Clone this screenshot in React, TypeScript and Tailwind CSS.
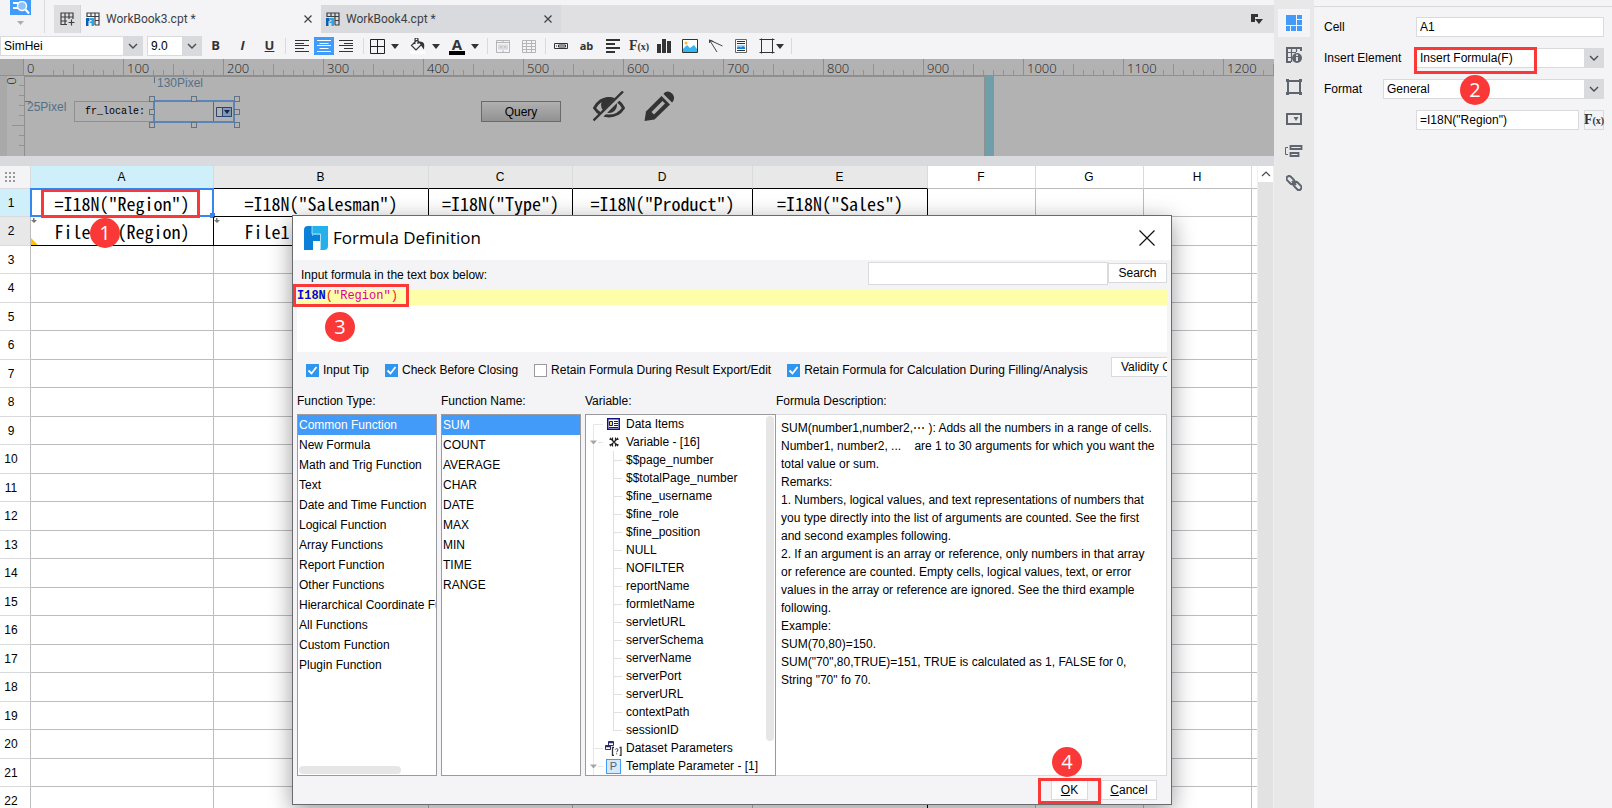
import React from "react";

const SANS = "font-['Liberation_Sans',sans-serif]";
const HUMANIST = "font-['Open_Sans',sans-serif]";
const MONO = "font-['Liberation_Mono',monospace]";
const HALFWIDTH = "font-['Noto_Sans_CJK_SC',sans-serif] [font-feature-settings:'hwid']";

function Chevron() {
  return (
    <svg width="10" height="6" viewBox="0 0 10 6" fill="none" stroke="#4a4a4f" strokeWidth="1.4">
      <path d="M1 1l4 4 4-4" />
    </svg>
  );
}

function DropArrow({ label, className }: { label: string; className: string }) {
  return (
    <button aria-label={label} className={`flex h-5 w-2 items-center justify-center ${className}`}>
      <svg width="8" height="5" viewBox="0 0 8 5">
        <path d="M0 0h8L4 5z" fill="#333" />
      </svg>
    </button>
  );
}

function Sep({ className }: { className: string }) {
  return <div className={`h-4 w-px shrink-0 bg-[#d9dadd] ${className}`} />;
}

function IconButton({
  label,
  className,
  children,
}: {
  label: string;
  className: string;
  children: React.ReactNode;
}) {
  return (
    <button aria-label={label} className={`flex h-[18px] shrink-0 items-center justify-center ${className}`}>
      {children}
    </button>
  );
}

function Dropdown({
  id,
  label,
  value,
  className,
}: {
  id: string;
  label?: string;
  value: string;
  className: string;
}) {
  return (
    <div className={`relative flex h-5 border border-[#d9dadd] bg-white ${className}`}>
      <select
        id={id}
        aria-label={label}
        defaultValue={value}
        className="h-full w-full appearance-none bg-white pr-5 pl-[3px] text-[12px] leading-[16px] text-black outline-none"
      >
        <option>{value}</option>
      </select>
      <div className="pointer-events-none absolute inset-y-0 right-0 flex w-[19px] items-center justify-center bg-[#d9dadd]">
        <Chevron />
      </div>
    </div>
  );
}

function Step({ n, className }: { n: number; className: string }) {
  return (
    <div
      className={`absolute z-20 flex size-[30px] items-center justify-center rounded-full bg-[#fb3838] text-[20px] leading-[30px] text-white ${HUMANIST} ${className}`}
    >
      {n}
    </div>
  );
}

function Mark({ className }: { className: string }) {
  return <div className={`pointer-events-none absolute z-10 border-[3px] border-[#fb3838] ${className}`} />;
}

function WorkbookIcon() {
  return (
    <svg width="14" height="14" viewBox="0 0 14 14" fill="none">
      <path d="M1 5V1h12v12H9M1 4.500h12M5 1v4M9 1v12M9 8.500h4" stroke="#3c3f45" strokeWidth="1.200" />
      <path d="M0 6h3.500v3H2.500v5H0z" fill="#0b5fae" />
      <path d="M4 6h4v8H5.500v-3H3.500V9.500H5.500V8H4z" fill="#2aa5e6" />
    </svg>
  );
}

function Tab({ name, className }: { name: string; className: string }) {
  return (
    <div className={`flex w-60 items-center gap-[6px] pr-[7px] pl-[5px] ${className}`}>
      <WorkbookIcon />
      <a href="#" className="flex-1 font-['Roboto',sans-serif] text-[12px] text-[#3c3f45]">
        {name}
      </a>
      <button aria-label={`Close ${name}`} className="flex size-3 items-center justify-center">
        <svg width="8" height="8" viewBox="0 0 8 8" stroke="#3c3f45" strokeWidth="1.2">
          <path d="M0.500 0.500l7 7M7.500 0.500l-7 7" />
        </svg>
      </button>
    </div>
  );
}

function TopBar() {
  return (
    <div className="flex h-[33px]">
      <div className="flex w-[54px]">
        <div className="flex w-[45px] flex-col items-center border-r border-[#d9dadd] pr-1">
          <button aria-label="Preview" className="flex h-[15px] w-[21px] items-end justify-center bg-[#429bf9]">
            <svg width="19" height="14" viewBox="0 0 19 14" fill="none" stroke="#fff">
              <path d="M2 2h5M2 7h5" strokeWidth="2" />
              <circle cx="11" cy="5" r="4.500" fill="#8cc2fb" strokeWidth="1.400" />
              <path d="M14.500 8.500l3.500 4" strokeWidth="2" />
            </svg>
          </button>
          <svg className="mt-[6px]" width="7" height="4" viewBox="0 0 7 4">
            <path d="M0 0h7L3.500 4z" fill="#adadb0" />
          </svg>
        </div>
      </div>
      <div className="mt-[5px] flex flex-1 bg-[#e0e0e2]">
        <button aria-label="New workbook" className="flex w-[27px] items-center justify-center border-r border-[#d2d3d6] bg-[#dedee0]">
          <svg width="15" height="14" viewBox="0 0 15 14" fill="none" stroke="#3c3f45" strokeWidth="1.200">
            <path d="M7 12.500H1V1h12v6M1 5h12M1 9h6M5 1v11.500M9 1v6" />
            <path d="M11.500 7.500v6M8.500 10.500h6" />
          </svg>
        </button>
        <Tab name="WorkBook3.cpt *" className="bg-[#f4f4f7]" />
        <Tab name="WorkBook4.cpt *" className="bg-[#d9dadd]" />
        <div className="flex flex-1 items-center justify-end pr-[11px]">
          <button aria-label="Tab list" className="flex">
            <svg width="12" height="10" viewBox="0 0 12 10" fill="#333">
              <path d="M0 0h7v3H4v5H0z" />
              <path d="M4 5h8l-4 5z" />
            </svg>
          </button>
        </div>
      </div>
    </div>
  );
}

function FxGlyph() {
  return (
    <span className="font-['Liberation_Serif',serif] text-[14px] leading-4 font-bold text-[#333]">
      F<span className="text-[10px]">(x)</span>
    </span>
  );
}

function Toolbar() {
  return (
    <div className="flex h-[26px] items-center bg-[#f4f4f7]">
      <Dropdown id="font" label="Font" value="SimHei" className="w-[143px]" />
      <Dropdown id="size" label="Font size" value="9.0" className="ml-1 w-[55px]" />
      <IconButton label="Bold" className={`w-[27px] text-[13px] font-bold text-[#333] ${HUMANIST}`}>B</IconButton>
      <IconButton label="Italic" className={`w-[27px] text-[13px] font-bold text-[#333] italic ${HUMANIST}`}>I</IconButton>
      <IconButton label="Underline" className={`w-[27px] text-[13px] font-bold text-[#333] underline ${HUMANIST}`}>U</IconButton>
      <Sep className="ml-[2px]" />
      <IconButton label="Align left" className="ml-[6px] w-5">
        <svg width="14" height="12" viewBox="0 0 14 12" stroke="#333" strokeWidth="1">
          <path d="M0 .5h14M0 3.500h9M0 5.500h14M0 8.500h9M0 11.500h14" />
        </svg>
      </IconButton>
      <IconButton label="Align center" className="ml-[2px] w-5 bg-[#429bf9]">
        <svg width="14" height="12" viewBox="0 0 14 12" stroke="#fff" strokeWidth="1">
          <path d="M0 .5h14M2.500 3.500h9M0 5.500h14M2.500 8.500h9M0 11.500h14" />
        </svg>
      </IconButton>
      <IconButton label="Align right" className="ml-[2px] w-5">
        <svg width="14" height="12" viewBox="0 0 14 12" stroke="#333" strokeWidth="1">
          <path d="M0 .5h14M5 3.500h9M0 5.500h14M5 8.500h9M0 11.500h14" />
        </svg>
      </IconButton>
      <Sep className="ml-[7px]" />
      <IconButton label="Borders" className="ml-[6px] w-[15px]">
        <svg width="15" height="15" viewBox="0 0 15 15" fill="none" stroke="#222" strokeWidth="1">
          <path d="M.5.5h14v14H.5zM7.500.5v14M.5 7.500h14" />
        </svg>
      </IconButton>
      <DropArrow label="Border options" className="ml-[6px]" />
      <IconButton label="Fill colour" className="ml-[11px] w-[15px]">
        <svg width="15" height="16" viewBox="0 0 15 16" fill="none" stroke="#333" strokeWidth="1.200">
          <path d="M6.500 2.500L1.500 7.500l4.500 4.500 5.500-5.500-4-4zM5 6V1.500a1.500 1.500 0 0 1 3 0V6" />
          <path d="M10 4c3 0 4.500 2 3.500 6l-2-3z" fill="#333" />
          <path d="M0 14.500h15" stroke="#fff" strokeWidth="3" />
        </svg>
      </IconButton>
      <DropArrow label="Fill options" className="ml-[7px]" />
      <IconButton label="Text colour" className="ml-[9px] w-4">
        <span className="flex flex-col items-center">
          <span className={`text-[15px] leading-[13px] font-bold text-[#333] ${HUMANIST}`}>A</span>
          <span className="h-[4px] w-4 bg-black" />
        </span>
      </IconButton>
      <DropArrow label="Text colour options" className="ml-[6px]" />
      <Sep className="ml-[8px]" />
      <IconButton label="Merge cells" className="ml-[8px] w-[14px]">
        <svg width="14" height="13" viewBox="0 0 14 13" fill="none" stroke="#b5b5b8">
          <path d="M.5.5h13v12H.5zM.5 2.500h13" />
          <path d="M2 4.500h10v5H2z" fill="#d9dadd" stroke="none" />
          <path d="M7 .5v2M7 10v2.500M4 7h2M8 7h2" />
        </svg>
      </IconButton>
      <IconButton label="Unmerge cells" className="ml-[12px] w-[14px]">
        <svg width="14" height="13" viewBox="0 0 14 13" fill="none" stroke="#b5b5b8">
          <path d="M.5.5h13v12H.5zM.5 3.500h13M.5 6.500h13M.5 9.500h13M4.500.5v12M9.500.5v12" />
        </svg>
      </IconButton>
      <Sep className="ml-[9px]" />
      <IconButton label="Widget" className="ml-[8px] w-[14px]">
        <svg width="14" height="6" viewBox="0 0 14 6" fill="none" stroke="#333">
          <path d="M.5.5h13v5H.5zM2 3h1M4.500 2h7v2h-7z" />
        </svg>
      </IconButton>
      <IconButton label="Text" className={`ml-[11px] w-[15px] text-[11px] font-bold text-[#333] ${HUMANIST}`}>ab</IconButton>
      <IconButton label="Rich text" className="ml-[12px] w-[14px]">
        <svg width="14" height="14" viewBox="0 0 14 14" stroke="#333" strokeWidth="2">
          <path d="M0 1h14M0 5h9M0 9h14M0 13h9" />
        </svg>
      </IconButton>
      <IconButton label="Formula" className="ml-[10px] w-[18px]">
        <FxGlyph />
      </IconButton>
      <IconButton label="Chart" className="ml-[9px] w-[14px]">
        <svg width="14" height="14" viewBox="0 0 14 14" fill="#333">
          <path d="M0 5h4v9H0zM5 0h4v14H5zM10 2h4v12h-4z" />
        </svg>
      </IconButton>
      <IconButton label="Image" className="ml-[11px] w-4">
        <svg width="16" height="14" viewBox="0 0 16 14">
          <path d="M.5.5h15v13H.5z" fill="#fff" stroke="#333" />
          <path d="M1 13V10l4-4 3 3 4-3 3 4v3z" fill="#35b5f2" />
          <circle cx="4" cy="4" r="1.500" fill="#f7b733" />
        </svg>
      </IconButton>
      <IconButton label="Slope line" className="ml-[11px] w-[14px]">
        <svg width="14" height="14" viewBox="0 0 14 14" stroke="#444" fill="none">
          <path d="M.5 1l13 6M.5 1l7.500 12M.5 1l4 1.500M.5 1v3" />
        </svg>
      </IconButton>
      <IconButton label="Sub report" className="ml-[12px] w-[12px]">
        <svg width="12" height="14" viewBox="0 0 12 14">
          <path d="M.5.5h11v13H.5z" fill="#fff" stroke="#666" />
          <path d="M2 2.500h8M2 4.500h8M2 11.500h8" stroke="#333" />
          <path d="M2 6h8v4H2z" fill="#9ed4f8" />
          <path d="M2 10V8.500l2-1 2 1 2-1.500 2 1.500V10z" fill="#1583d6" />
        </svg>
      </IconButton>
      <IconButton label="Float element" className="ml-[12px] w-4">
        <svg width="16" height="16" viewBox="0 0 16 16" fill="none" stroke="#333">
          <path d="M2.500.5v15M13.500.5v15M.5 1.500h15M.5 14.500h15" />
        </svg>
      </IconButton>
      <DropArrow label="Float options" className="ml-px" />
      <Sep className="ml-[7px]" />
    </div>
  );
}

const RULER = [0, 100, 200, 300, 400, 500, 600, 700, 800, 900, 1000, 1100, 1200];

function Ruler() {
  return (
    <div className="flex h-[17px] overflow-hidden border-b border-[#8f8f8f] bg-[#b2b2b2]">
      <div className="w-[23px] shrink-0 bg-[#a9a9a9]" />
      {RULER.map((v) => (
        <div key={v} className="relative w-[100px] shrink-0 border-l border-[#8f8f8f] pl-[3px]">
          <svg className="absolute top-0 left-0" width="99" height="16" viewBox="0 0 99 16" stroke="#929292">
            <path
              d={
                v >= 1000
                  ? "M39.500 11v5M49.500 5v11M59.500 11v5M69.500 11v5M79.500 11v5M89.500 11v5"
                  : "M29.500 11v5M39.500 11v5M49.500 5v11M59.500 11v5M69.500 11v5M79.500 11v5M89.500 11v5"
              }
            />
          </svg>
          <span className={`relative block text-[13px] leading-[19px] font-light text-[#222] ${HUMANIST}`}>{v}</span>
        </div>
      ))}
    </div>
  );
}

function Handle({ className }: { className: string }) {
  return <div className={`absolute size-[6px] border border-[#5f7489] bg-[#b2b2b2] ${className}`} />;
}

function ParameterPane() {
  return (
    <div className="flex h-[80px] shrink-0 overflow-hidden bg-[#b2b2b2]">
      <div className="w-[7px] bg-[#a9a9a9]" />
      <div className="relative w-[18px] border-r border-[#8f8f8f]">
        <span className={`absolute top-0 left-[1px] rotate-90 text-[13px] leading-[10px] font-light text-[#222] ${HUMANIST}`}>0</span>
        <svg className="absolute top-0 right-0" width="12" height="80" viewBox="0 0 12 80" stroke="#929292">
          <path d="M7 9.500h5M7 19.500h5M7 29.500h5M7 39.500h5M0 49.500h12M7 59.500h5M7 69.500h5" />
        </svg>
      </div>
      <div className={`relative w-[960px] border-t border-r border-[#8f8f8f] ${SANS}`}>
        <span className={`absolute -top-px left-[132px] text-[12px] leading-[14px] text-[#557087] ${SANS}`}>130Pixel</span>
        <div className="absolute top-0 left-[129px] h-[6px] w-px bg-[#557087]" />
        <span className={`absolute top-[23px] left-[2px] text-[12px] leading-[14px] text-[#557087] ${SANS}`}>25Pixel</span>
        <div className="absolute top-[24px] left-0 h-px w-[6px] bg-[#557087]" />
        <label
          htmlFor="locale"
          className={`absolute top-[24px] left-[49px] h-[21px] w-[80px] border border-[#8f8f8f] pl-[10px] text-[10px] leading-[20px] text-black ${MONO}`}
        >
          fr_locale:
        </label>
        <div className="absolute top-[23px] left-[128px] flex h-[23px] w-[82px] border-2 border-[#5985b8]">
          <input id="locale" className="w-full min-w-0 bg-transparent outline-none" />
          <div className="flex w-[20px] shrink-0 items-center justify-center border-l border-[#666]">
            <svg width="16" height="10" viewBox="0 0 16 10">
              <path d="M.5.5h15v9H.5z" fill="#b2b2b2" stroke="#2a4570" />
              <path d="M6.500.5h9v9h-9z" fill="#8098bd" stroke="#2a4570" />
              <path d="M8 3h6l-3 4z" fill="#14264a" />
            </svg>
          </div>
        </div>
        <Handle className="top-[19px] left-[124px]" />
        <Handle className="top-[19px] left-[166px]" />
        <Handle className="top-[19px] left-[209px]" />
        <Handle className="top-[32px] left-[124px]" />
        <Handle className="top-[32px] left-[209px]" />
        <Handle className="top-[45px] left-[124px]" />
        <Handle className="top-[45px] left-[166px]" />
        <Handle className="top-[45px] left-[209px]" />
        <button className="absolute top-[24px] left-[456px] h-[21px] w-[80px] border border-[#6a6a6a] bg-linear-to-b from-[#b0b0b0] to-[#929292] text-[12px] leading-[18px] text-black">
          Query
        </button>
        <button aria-label="Hide" className="absolute top-[14px] left-[568px]">
          <svg width="32" height="31" viewBox="0 0 32 31" fill="none">
            <path d="M1.500 17C5 10.500 10 7.500 16 7.500s11 3 14.500 9.500c-3.500 5.500-8.500 8-14.500 8S5 22.500 1.500 17z" stroke="#333" strokeWidth="2.800" />
            <circle cx="16" cy="14" r="8" fill="#333" />
            <path d="M2 30.500L31 1.500" stroke="#b2b2b2" strokeWidth="5" />
            <path d="M.5 29.500L30 .5" stroke="#333" strokeWidth="2.400" />
          </svg>
        </button>
        <button aria-label="Edit" className="absolute top-[14px] left-[619px]">
          <svg width="31" height="31" viewBox="0 0 31 31" fill="#333">
            <path d="M.5 30L2 20.500 17.500 5l8.500 8.500L10.500 28.500z" />
            <path d="M19.500 3c2.500-3.500 6-3 8.500-.5s3 6 0 9z" />
            <path d="M7.500 21L18.500 10l2.500 2.500L10 23.500z" fill="#b2b2b2" />
          </svg>
        </button>
      </div>
      <div className="w-[9px] bg-[#6f9fab]" />
    </div>
  );
}

type Col = { name: string; head: string; row1?: string; row2?: string };

const COLUMNS: Col[] = [
  { name: "A", head: "bg-[#cfeffb] border-b-black", row1: '=I18N("Region")', row2: "File1.G(Region)" },
  { name: "B", head: "bg-[#e8e8e8] border-b-black", row1: '=I18N("Salesman")', row2: "File1.G(Salesman)" },
  { name: "C", head: "bg-[#e8e8e8] border-b-black", row1: '=I18N("Type")' },
  { name: "D", head: "bg-[#e8e8e8] border-b-black", row1: '=I18N("Product")' },
  { name: "E", head: "bg-[#e8e8e8] border-b-black", row1: '=I18N("Sales")' },
  { name: "F", head: "bg-white border-b-[#bdbdbf]" },
  { name: "G", head: "bg-white border-b-[#bdbdbf]" },
  { name: "H", head: "bg-white border-b-[#bdbdbf]" },
];

const ROWS = Array.from({ length: 22 }, (_, i) => i + 1);

function borderColor(row: number, col: string) {
  const filled = "ABCDE".includes(col);
  if (row <= 2 && filled) return "border-black";
  if (col === "E") return "border-b-[#bdbdbf] border-r-black";
  return "border-[#bdbdbf]";
}

function rowHead(row: number) {
  if (row === 1) return "bg-[#cfeffb]";
  if (row === 2) return "bg-[#e8e8e8]";
  return "bg-white";
}

function ExpandMark() {
  return (
    <svg className="absolute top-[1px] left-0" width="6" height="5" viewBox="0 0 6 5">
      <path d="M2 0h1.500v2H6L3 5 0 2h2z" fill="#777" />
    </svg>
  );
}

function Sheet() {
  return (
    <div className="flex min-h-0 flex-1 overflow-hidden bg-white">
      <div className="min-w-0 flex-1">
        <table className="w-full table-fixed border-separate border-spacing-0 text-[14px] text-black">
          <colgroup>
            <col className="w-[31px]" />
            <col className="w-[183px]" />
            <col className="w-[215px]" />
            <col className="w-[144px]" />
            <col className="w-[180px]" />
            <col className="w-[175px]" />
            <col className="w-[108px]" />
            <col className="w-[108px]" />
            <col className="w-[108px]" />
            <col />
          </colgroup>
          <thead>
            <tr className="h-[23px]">
              <th aria-label="Select all" className="border-r border-b border-[#d9dadd] bg-[#f4f4f7] p-0">
                <svg className="ml-[5px]" width="12" height="10" viewBox="0 0 12 10" stroke="#999" strokeWidth="2" strokeDasharray="2 2">
                  <path d="M0 1h10M0 5h10M0 9h10" />
                </svg>
              </th>
              {COLUMNS.map((c) => (
                <th
                  key={c.name}
                  className={`border-r border-b border-r-[#d9dadd] p-0 pr-px text-[12px] leading-[20px] font-normal ${c.head}`}
                >
                  {c.name}
                </th>
              ))}
              <th aria-label="More columns" className="border-b border-[#bdbdbf] p-0" />
            </tr>
          </thead>
          <tbody>
            {ROWS.map((r) => (
              <tr key={r} className={r % 2 === 1 ? "h-[28px]" : "h-[29px]"}>
                <th
                  className={`border-r border-b border-r-[#bdbdbf] border-b-[#d9dadd] p-0 pr-2 text-[12px] leading-[20px] font-normal ${rowHead(r)}`}
                >
                  {r}
                </th>
                {COLUMNS.map((c) => (
                  <td
                    key={c.name}
                    className={`relative border-r border-b p-0 text-center text-[18px] leading-[20px] ${HALFWIDTH} ${borderColor(r, c.name)}`}
                  >
                    {r === 1 && c.row1}
                    {r === 2 && c.row2}
                    {r === 2 && c.row2 && <ExpandMark />}
                    {r === 1 && c.name === "A" && (
                      <>
                        <div className="absolute -inset-px border-2 border-[#3586ee]" />
                        <div className="absolute -right-[2px] -bottom-[2px] size-[5px] bg-[#3586ee]" />
                        <Mark className="top-0 left-[10px] h-[29px] w-[159px]" />
                        <Step n={1} className="top-[29px] left-[59px]" />
                      </>
                    )}
                    {r === 2 && c.name === "A" && (
                      <svg className="absolute bottom-0 left-0" width="7" height="7" viewBox="0 0 7 7">
                        <path d="M0 0l7 7H0z" fill="#fbc20b" />
                      </svg>
                    )}
                  </td>
                ))}
                <td className="border-b border-[#bdbdbf] p-0" />
              </tr>
            ))}
          </tbody>
        </table>
      </div>
      <div className="flex w-[17px] shrink-0 flex-col border-x border-[#f0f0f0] bg-[#e2e2e2]">
        <button aria-label="Scroll up" className="flex h-4 items-center justify-center bg-white">
          <svg width="10" height="6" viewBox="0 0 10 6" fill="none" stroke="#4a4a4f" strokeWidth="1.200">
            <path d="M1 5l4-4 4 4" />
          </svg>
        </button>
      </div>
    </div>
  );
}

function RailButton({ label, active, children }: { label: string; active?: boolean; children: React.ReactNode }) {
  return (
    <button
      aria-label={label}
      className={`flex h-7 w-8 items-center justify-center ${active ? "bg-[#f4f4f7]" : ""}`}
    >
      {children}
    </button>
  );
}

function Rail() {
  return (
    <div className="flex w-10 shrink-0 flex-col items-center gap-1 bg-[#e8e8e9] pt-[9px]">
      <RailButton label="Cell element" active>
        <svg width="16" height="16" viewBox="0 0 16 16" fill="#429bf9">
          <path d="M0 0h10v10H0zM11 0h5v4h-5zM11 5h5v5h-5zM0 11h4v5H0zM5 11h5v5H5zM11 11h5v5h-5z" />
        </svg>
      </RailButton>
      <RailButton label="Cell attributes">
        <svg width="16" height="16" viewBox="0 0 16 16" fill="none" stroke="#5f646e">
          <path d="M5 15H1V1h14v3" strokeWidth="2" />
          <path d="M1 5.500h9M1 10.500h4M5.500 1v14M10.500 1v4" strokeWidth="1.200" />
          <circle cx="11" cy="11" r="5" fill="#5f646e" stroke="none" />
          <path d="M11 7.500v1.500M11 10v4" stroke="#fff" strokeWidth="1.600" />
        </svg>
      </RailButton>
      <RailButton label="Float element">
        <svg width="16" height="16" viewBox="0 0 16 16" fill="none" stroke="#5f646e">
          <path d="M2 2h12v12H2z" strokeWidth="2" />
          <path d="M0 0h3v3H0zM13 0h3v3h-3zM0 13h3v3H0zM13 13h3v3h-3z" fill="#5f646e" stroke="none" />
        </svg>
      </RailButton>
      <RailButton label="Widget settings">
        <svg width="16" height="12" viewBox="0 0 16 12" fill="none" stroke="#5f646e">
          <path d="M1 1h14v10H1z" strokeWidth="2" />
          <path d="M7.500 4h5l-2.500 4z" fill="#5f646e" stroke="none" />
        </svg>
      </RailButton>
      <RailButton label="Condition attributes">
        <svg width="18" height="12" viewBox="0 0 18 12" fill="none" stroke="#5f646e">
          <path d="M3 2.500H.500v7H3" />
          <path d="M5.500 1h11v3h-11zM5.500 8h8v3h-8z" strokeWidth="1.800" />
        </svg>
      </RailButton>
      <RailButton label="Hyperlink">
        <svg width="16" height="16" viewBox="0 0 16 16" fill="none" stroke="#5f646e" strokeWidth="2">
          <rect x="0" y="2.500" width="9" height="5" rx="2.500" transform="rotate(45 4.500 5)" />
          <rect x="7" y="8.500" width="9" height="5" rx="2.500" transform="rotate(45 11.500 11)" />
          <path d="M6 6l4 4" />
        </svg>
      </RailButton>
    </div>
  );
}

function Properties() {
  return (
    <aside className="w-[298px] shrink-0 bg-[#f4f4f7] pt-[6px] text-[12px] text-black">
      <div className="flex flex-col gap-[11px] border-t border-[#d9dadd] pt-[10px] pr-2 pl-[10px]">
        <div className="flex h-5 items-center">
          <label htmlFor="cell" className="w-[92px]">Cell</label>
          <input id="cell" defaultValue="A1" className="h-5 min-w-0 flex-1 border border-[#d9dadd] bg-white px-[3px] outline-none" />
        </div>
        <div className="relative flex h-5 items-center">
          <label htmlFor="element" className="w-[92px]">Insert Element</label>
          <Dropdown id="element" value="Insert Formula(F)" className="flex-1" />
          <Mark className="-top-[1px] left-[90px] h-[27px] w-[123px]" />
          <Step n={2} className="top-[27px] left-[136px]" />
        </div>
        <div className="flex h-5 items-center">
          <label htmlFor="format" className="w-[59px]">Format</label>
          <Dropdown id="format" value="General" className="flex-1" />
        </div>
        <div className="flex h-5 items-center gap-[5px] pl-[92px]">
          <input
            aria-label="Formula"
            defaultValue={'=I18N("Region")'}
            className="h-5 min-w-0 flex-1 border border-[#d9dadd] bg-white px-[3px] outline-none"
          />
          <button aria-label="Edit formula" className="flex size-5 items-center justify-center border border-[#d9dadd]">
            <FxGlyph />
          </button>
        </div>
      </div>
    </aside>
  );
}

function CheckOption({ label, checked }: { label: string; checked: boolean }) {
  return (
    <label className="flex items-center gap-1 whitespace-nowrap">
      <span className="relative flex size-[13px]">
        <input
          type="checkbox"
          defaultChecked={checked}
          className="peer size-[13px] appearance-none border border-[#9a9a9f] bg-white checked:border-[#2f96f0] checked:bg-[#2f96f0]"
        />
        <svg
          className="pointer-events-none absolute inset-0 hidden peer-checked:block"
          width="13"
          height="13"
          viewBox="0 0 13 13"
          fill="none"
          stroke="#fff"
          strokeWidth="1.800"
        >
          <path d="M2.500 6.500l3 3 5-6.500" />
        </svg>
      </span>
      {label}
    </label>
  );
}

const TYPES = [
  "Common Function",
  "New Formula",
  "Math and Trig Function",
  "Text",
  "Date and Time Function",
  "Logical Function",
  "Array Functions",
  "Report Function",
  "Other Functions",
  "Hierarchical Coordinate Function",
  "All Functions",
  "Custom Function",
  "Plugin Function",
];

const NAMES = ["SUM", "COUNT", "AVERAGE", "CHAR", "DATE", "MAX", "MIN", "TIME", "RANGE"];

const VARIABLES = [
  "$$page_number",
  "$$totalPage_number",
  "$fine_username",
  "$fine_role",
  "$fine_position",
  "NULL",
  "NOFILTER",
  "reportName",
  "formletName",
  "servletURL",
  "serverSchema",
  "serverName",
  "serverPort",
  "serverURL",
  "contextPath",
  "sessionID",
];

const DESCRIPTION = [
  "SUM(number1,number2,⋯ ): Adds all the numbers in a range of cells.",
  "Number1, number2, ...\u00a0\u00a0\u00a0 are 1 to 30 arguments for which you want the total value or sum.",
  "Remarks:",
  "1. Numbers, logical values, and text representations of numbers that you type directly into the list of arguments are counted. See the first and second examples following.",
  "2. If an argument is an array or reference, only numbers in that array or reference are counted. Empty cells, logical values, text, or error values in the array or reference are ignored. See the third example following.",
  "Example:",
  "SUM(70,80)=150.",
  'SUM("70",80,TRUE)=151, TRUE is calculated as 1, FALSE for 0, String "70" fo 70.',
];

function ListPane({ title, items, scroll }: { title: string; items: string[]; scroll?: boolean }) {
  return (
    <section className="flex w-[140px] shrink-0 flex-col">
      <h2 className="h-[25px] leading-[24px]">{title}</h2>
      <div className="flex flex-1 flex-col overflow-hidden border border-[#9a9a9f] bg-white">
        <ul className="flex-1">
          {items.map((item, i) => (
            <li
              key={item}
              className={`h-5 pl-px leading-5 whitespace-nowrap ${i === 0 ? "bg-[#429bf9] text-white" : ""}`}
            >
              {item}
            </li>
          ))}
        </ul>
        {scroll && <div className="mb-px ml-px h-2 w-[102px] rounded-full bg-[#e6e6e6]" />}
      </div>
    </section>
  );
}

function Branch({
  first,
  arrow,
  icon,
  children,
}: {
  first?: boolean;
  arrow?: boolean;
  icon: React.ReactNode;
  children: React.ReactNode;
}) {
  return (
    <li className="flex h-[18px] items-center">
      <svg className="ml-[3px]" width="15" height="18" viewBox="0 0 15 18" fill="none">
        <path d={first ? "M4.500 18V9.500H14" : "M4.500 0v18M4.500 9.500H14"} stroke="#e6e6e6" />
        {arrow && <path d="M0 7h9v5H0z" fill="#fff" />}
        {arrow && <path d="M1 7.500h7L4.500 11.500z" fill="#a5a5a8" />}
      </svg>
      <div className="mr-[3px] flex w-[19px] justify-center">{icon}</div>
      <span className="whitespace-nowrap">{children}</span>
    </li>
  );
}

function VariableTree() {
  return (
    <section className="flex w-[191px] shrink-0 flex-col">
      <h2 className="h-[25px] leading-[24px]">Variable:</h2>
      <div className="relative flex-1 overflow-hidden border border-[#9a9a9f] bg-white">
        <ul>
          <Branch
            first
            icon={
              <svg width="13" height="12" viewBox="0 0 13 12">
                <path d="M.75.750h11.500v10.500H.750z" fill="#fff" stroke="#10108a" strokeWidth="1.500" />
                <path d="M2.500 3.500h3v4h-3z" fill="#f5e74a" stroke="#10108a" />
                <path d="M7 3.500h4M7 5.500h4M7 7.500h4M2 9.500h9" stroke="#10108a" />
              </svg>
            }
          >
            Data Items
          </Branch>
          <Branch
            arrow
            icon={
              <svg width="10" height="10" viewBox="0 0 10 10" fill="none" stroke="#222">
                <path d="M1 1l2.500 2.500L5 5M9 1L5 5M1 9l4-4M9 9L5 5" strokeWidth="1.400" />
                <path d="M.5 2.500h3v-2M9.500 2.500h-3v-2M.5 7.500h3v2M9.500 7.500h-3v2" strokeWidth="1.200" />
              </svg>
            }
          >
            Variable - [16]
          </Branch>
          <li>
            <ul className="ml-[7px] border-l border-[#e6e6e6] pl-[19px]">
              {VARIABLES.map((v, i) => (
                <li key={v} className="flex h-[18px] items-center gap-1">
                  <svg width="9" height="18" viewBox="0 0 9 18" fill="none" stroke="#e0e0e0">
                    <path d={i === VARIABLES.length - 1 ? "M.5 0v9.500H9" : "M.5 0v18M.5 9.500H9"} />
                  </svg>
                  <span>{v}</span>
                </li>
              ))}
            </ul>
          </li>
          <Branch
            icon={
              <svg width="17" height="15" viewBox="0 0 17 15" fill="none" stroke="#2d2d6b">
                <path d="M3.500.5h5v4h-5zM.5 4.500h5v4h-5z" fill="#fff" />
                <path d="M3.500 1.500h5M.5 5.500h5" strokeWidth="1.500" />
                <path d="M9 6.500H7.500v8H9M14.500 6.500H16v8h-1.500" stroke="#333" strokeWidth="1.300" />
                <path d="M10.300 8.500c.5-1.300 3-1 2.700.5-.2 1-1.300 1-1.300 2.200M11.700 12.300v1" />
              </svg>
            }
          >
            Dataset Parameters
          </Branch>
          <Branch
            arrow
            icon={
              <span className="flex size-[15px] items-center justify-center border border-[#429bf9] bg-[#d5e9fb] text-[11px] leading-[13px] text-[#55606e]">
                P
              </span>
            }
          >
            Template Parameter - [1]
          </Branch>
        </ul>
        <div className="absolute top-px right-px h-[325px] w-2 rounded-full bg-[#e6e6e6]" />
      </div>
    </section>
  );
}

function FormulaDialog() {
  return (
    <div
      role="dialog"
      aria-label="Formula Definition"
      className="absolute top-[215px] left-[292px] z-30 flex w-[880px] flex-col border border-[#6b6b6f] bg-[#f4f4f7] text-[12px] text-black shadow-[0_6px_22px_rgba(0,0,0,0.4)]"
    >
      <header className="flex h-11 items-center gap-[5px] bg-white pr-4 pl-[11px]">
        <svg width="24" height="24" viewBox="0 0 24 24">
          <path d="M4 0h4v10h8v5H9v9H0V4a4 4 0 0 1 4-4z" fill="#0a80d8" />
          <path d="M8 0h16v20a4 4 0 0 1-4 4h-4V9H8z" fill="#25b0ea" />
          <path d="M8 0v8h8.500v15.500" fill="none" stroke="#fff" strokeWidth="1" opacity=".6" />
          <path d="M8.500 9H16v5.500H8.500z" fill="#0a80d8" />
        </svg>
        <h1 className={`flex-1 text-[17px] leading-6 ${HUMANIST}`}>Formula Definition</h1>
        <button aria-label="Close" className="flex">
          <svg width="16" height="16" viewBox="0 0 16 16" stroke="#111" strokeWidth="1.200">
            <path d="M.5.5l15 15M15.500.5l-15 15" />
          </svg>
        </button>
      </header>

      <div className="flex h-[29px] items-start pt-[2px] pr-1 pl-2">
        <label htmlFor="formula" className="flex-1 pt-[4px] leading-[18px]">
          Input formula in the text box below:
        </label>
        <input aria-label="Search text" className="h-[23px] w-60 border border-[#d9dadd] bg-white px-1 outline-none" />
        <button className="mt-px h-5 w-[59px] border border-[#d9dadd] bg-white leading-[18px]">Search</button>
      </div>

      <div
        id="formula"
        role="textbox"
        className={`relative mr-1 ml-1 h-[63px] bg-white text-[12px] leading-4 ${MONO}`}
      >
        <div className="h-4 bg-[#fefea8] leading-[14px]">
          <span className="font-bold text-[#0505e0]">I18N</span>
          <span className="text-[#f01515]">(</span>
          <span className="text-[#dc009c]">"Region"</span>
          <span className="text-[#f01515]">)</span>
        </div>
        <Mark className="-top-[5px] -left-[4px] h-[23px] w-[116px]" />
        <Step n={3} className="top-[23px] left-[28px]" />
      </div>

      <div className="flex h-[37px] items-start justify-between overflow-hidden pr-1 pl-[13px]">
        <div className="flex gap-4 pt-[10px] leading-4">
          <CheckOption label="Input Tip" checked />
          <CheckOption label="Check Before Closing" checked />
          <CheckOption label="Retain Formula During Result Export/Edit" checked={false} />
          <CheckOption label="Retain Formula for Calculation During Filling/Analysis" checked />
        </div>
        <button className="mt-[5px] h-5 w-[56px] overflow-hidden border border-r-0 border-[#d9dadd] bg-white pl-[9px] text-left leading-[18px] whitespace-nowrap">
          Validity Check
        </button>
      </div>

      <div className="flex h-[387px] gap-1 px-1">
        <ListPane title="Function Type:" items={TYPES} scroll />
        <ListPane title="Function Name:" items={NAMES} />
        <div className="flex min-w-0 flex-1">
          <VariableTree />
          <section className="flex min-w-0 flex-1 flex-col">
            <h2 className="h-[25px] leading-[24px]">Formula Description:</h2>
            <div className="flex-1 border border-l-0 border-[#d9dadd] bg-white pt-1 pr-[10px] pl-[5px] leading-[18px]">
              {DESCRIPTION.map((p) => (
                <p key={p}>{p}</p>
              ))}
            </div>
          </section>
        </div>
      </div>

      <footer className="relative flex h-7 justify-end gap-[13px] pt-1 pr-[14px]">
        <button className="h-5 w-[37px] border border-[#d9dadd] bg-white leading-[18px]">
          <u>O</u>K
        </button>
        <button className="h-5 w-[56px] border border-[#d9dadd] bg-white leading-[18px]">
          <u>C</u>ancel
        </button>
        <Mark className="top-[2px] right-[70px] h-[26px] w-[63px]" />
        <Step n={4} className="-top-[29px] right-[89px]" />
      </footer>
    </div>
  );
}

export default function App() {
  return (
    <div className={`relative flex h-screen overflow-hidden bg-[#f4f4f7] text-[12px] ${SANS}`}>
      <main className="flex min-w-0 flex-1 flex-col">
        <TopBar />
        <Toolbar />
        <Ruler />
        <ParameterPane />
        <div className="h-[10px] shrink-0 bg-[#d9dadd]" />
        <Sheet />
      </main>
      <Rail />
      <Properties />
      <FormulaDialog />
    </div>
  );
}
